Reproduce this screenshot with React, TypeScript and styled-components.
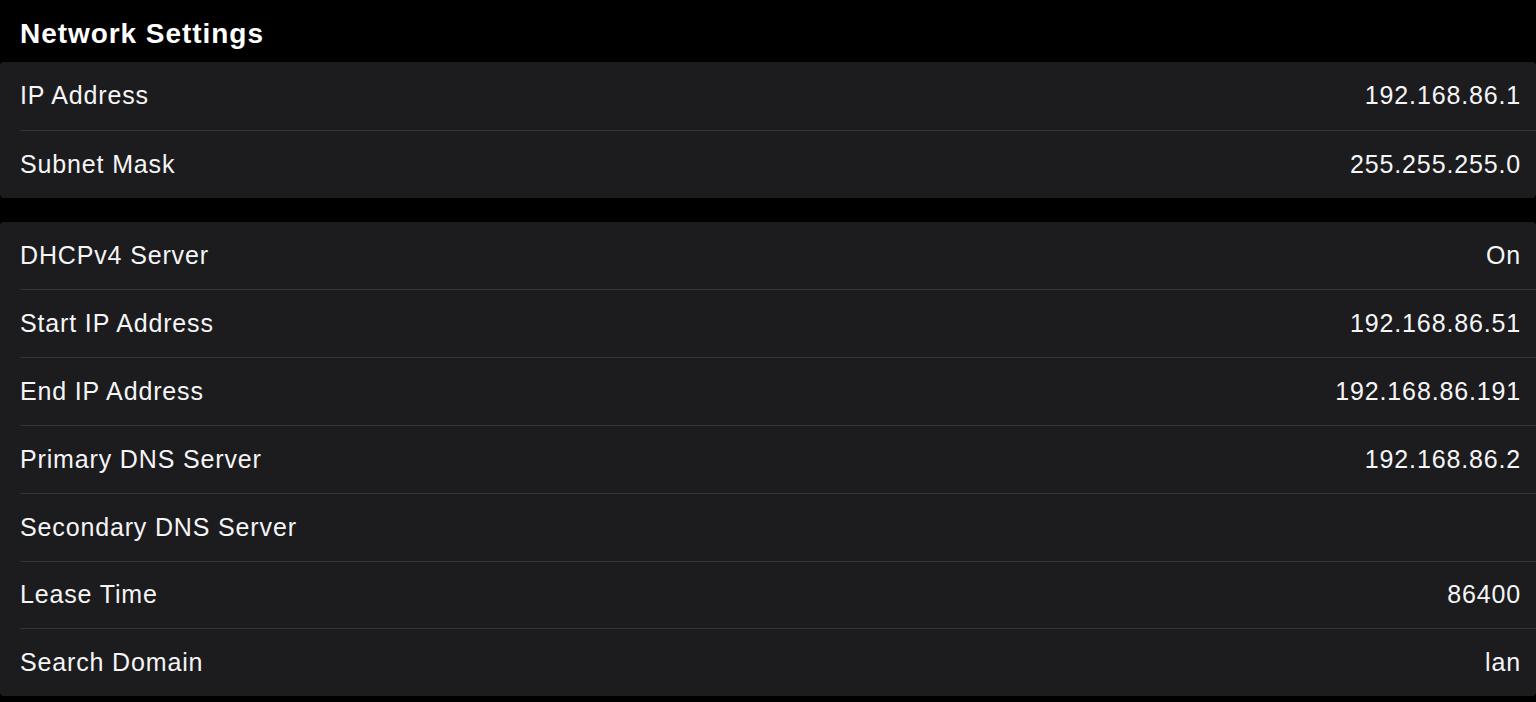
import React from "react";
import styled, { createGlobalStyle } from "styled-components";

const GlobalStyle = createGlobalStyle`
  html, body {
    margin: 0;
    padding: 0;
    background: #000;
  }
  body {
    font-family: "Liberation Sans", Arial, sans-serif;
    color: #fff;
    -webkit-font-smoothing: antialiased;
  }
  * {
    box-sizing: border-box;
  }
`;

interface Setting {
  label: string;
  value: string;
}

const network: Setting[] = [
  { label: "IP Address", value: "192.168.86.1" },
  { label: "Subnet Mask", value: "255.255.255.0" },
];

const dhcp: Setting[] = [
  { label: "DHCPv4 Server", value: "On" },
  { label: "Start IP Address", value: "192.168.86.51" },
  { label: "End IP Address", value: "192.168.86.191" },
  { label: "Primary DNS Server", value: "192.168.86.2" },
  { label: "Secondary DNS Server", value: "" },
  { label: "Lease Time", value: "86400" },
  { label: "Search Domain", value: "lan" },
];

const Page = styled.main`
  width: 1536px;
  height: 702px;
  overflow: hidden;
`;

const Header = styled.h1`
  margin: 0;
  height: 62px;
  padding: 6px 20px 0;
  display: flex;
  align-items: center;
  font-size: 28px;
  font-weight: 700;
  letter-spacing: 0.95px;
`;

const Cards = styled.div`
  display: flex;
  flex-direction: column;
  gap: 24px;
`;

const Card = styled.section`
  flex-shrink: 0;
  background: #1c1c1e;
  border-radius: 4px;
  display: flex;
  flex-direction: column;
`;

const Row = styled.div`
  height: 67.8px;
  flex-shrink: 0;
  margin-left: 20px;
  padding-right: 15px;
  display: flex;
  align-items: center;
  justify-content: space-between;
  font-size: 25px;
  letter-spacing: 0.85px;
  & + & {
    border-top: 1px solid #343436;
  }
`;

const Label = styled.span`
  color: #f5f5f7;
`;

const Value = styled.span`
  color: #f5f5f7;
`;

const SettingsCard: React.FC<{ items: Setting[] }> = ({ items }) => (
  <Card>
    {items.map((item) => (
      <Row key={item.label}>
        <Label>{item.label}</Label>
        <Value>{item.value}</Value>
      </Row>
    ))}
  </Card>
);

export default function App() {
  return (
    <>
      <GlobalStyle />
      <Page>
        <Header>Network Settings</Header>
        <Cards>
          <SettingsCard items={network} />
          <SettingsCard items={dhcp} />
        </Cards>
      </Page>
    </>
  );
}
